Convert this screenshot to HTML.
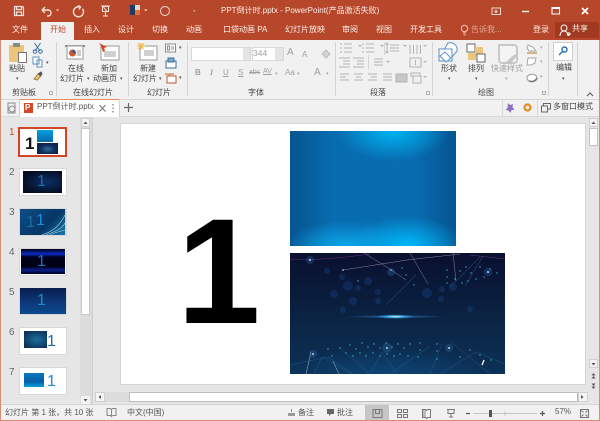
<!DOCTYPE html>
<html><head><meta charset="utf-8"><style>
html,body{margin:0;padding:0;background:#e6e6e6}
#w{position:relative;width:600px;height:421px;overflow:hidden;background:#e6e6e6;font-family:"Liberation Sans","Noto Sans CJK SC",sans-serif;font-size:8px;color:#444;filter:blur(.3px)}
#w div,#w span,#w svg{position:absolute}
.t{white-space:nowrap;line-height:12px}
.wh{color:#fbeee9}
.g{color:#a0a0a0}
.ar{font-size:5px;color:#555}
.s{background:#fff;border:1px solid #c8c8c8;box-sizing:border-box}
.th{background:#fff;border:1px solid #d8d8d8;box-sizing:border-box}
.n{color:#666;font-size:10px;left:9px;line-height:12px}
.sep{background:#d4d4d4;width:1px;top:42px;height:54px}
.tn{font-size:16px;line-height:15px;white-space:nowrap}
</style></head><body><div id="w">
<div style="left:0;top:0;width:600px;height:40px;background:#b7472a"></div>
<div style="left:41px;top:22px;width:33px;height:18px;background:#f1f1f1"></div>
<div style="left:1px;top:40px;width:598px;height:59px;background:#f1f1f1"></div>
<div style="left:1px;top:99px;width:598px;height:1px;background:#d6d6d6"></div>
<div style="left:1px;top:100px;width:598px;height:16px;background:#f1f1f1"></div>
<div style="left:1px;top:116px;width:598px;height:1px;background:#d9d9d9"></div>
<div style="left:0;top:40px;width:1px;height:381px;background:#d98a75"></div>
<div style="left:599px;top:40px;width:1px;height:381px;background:#d98a75"></div>
<div style="left:0;top:420px;width:600px;height:1px;background:#d98a75"></div>

<!-- QAT icons -->
<svg style="left:0;top:0" width="300" height="22" fill="none" stroke="#f6e3dc" stroke-width="1.200">
<path d="M14.500 6.500h8l1 1v8h-9z M16.500 6.500v3h5v-3 M16.500 15.500v-3.500h5v3.500"/>
<path d="M42 10l3-3M42 10l3 3M42 10h6c4 0 4 6 0 6h-1" stroke-width="1.400"/>
<path d="M56 9.500h3l-1.500 1.700z" fill="#f6e3dc" stroke="none"/>
<path d="M80 7a5 5 0 1 0 2.500 1.800M78 5.500l2.500 1.500-1.500 2.500" stroke-width="1.400"/>
<path d="M101 6h9M102.500 6.500h6v5h-6zM105.500 11.500v4M103 16h5M103.500 7l4 5" stroke-width="1"/>
<circle cx="165" cy="11" r="4.500" stroke-width=".9"/>
<path d="M193 10.500h2.500l-1.200 1.200z" fill="#f6e3dc" stroke="none"/>
<path d="M144 9.500h3.500l-1.700 1.700z" fill="#f6e3dc" stroke="none"/>
</svg>
<div style="left:130px;top:5px;width:5px;height:10px;background:#1f3b63"></div>
<div style="left:135px;top:5px;width:5px;height:5px;background:#d9d9d9"></div>
<div style="left:135px;top:10px;width:5px;height:5px;background:#e8702a"></div>

<span class="t wh" style="left:221px;top:5px;width:200px">PPT倒计时.pptx - PowerPoint(产品激活失败)</span>
<!-- window controls -->
<svg style="left:480px;top:0" width="120" height="22" fill="none" stroke="#fff">
<path d="M12 8h8.500v6.500H12zM16 9.500v3M14.500 11l1.500 1.500 1.500-1.500" stroke="#f3d9d0"/>
<path d="M42 11.500h7" stroke-width="1.400"/>
<path d="M72 7.500h7.500v6.500H72z" stroke-width="1.100"/><path d="M72 8h7.500" stroke-width="2"/>
<path d="M102 8l6 6M108 8l-6 6" stroke-width="1.700"/>
</svg>

<!-- tabs -->
<span class="t wh" style="left:12px;top:24px">文件</span>
<span class="t" style="left:50px;top:24px;color:#c0492a">开始</span>
<span class="t wh" style="left:84px;top:24px">插入</span>
<span class="t wh" style="left:118px;top:24px">设计</span>
<span class="t wh" style="left:152px;top:24px">切换</span>
<span class="t wh" style="left:186px;top:24px">动画</span>
<span class="t wh" style="left:223px;top:24px">口袋动画 PA</span>
<span class="t wh" style="left:285px;top:24px">幻灯片放映</span>
<span class="t wh" style="left:342px;top:24px">审阅</span>
<span class="t wh" style="left:376px;top:24px">视图</span>
<span class="t wh" style="left:410px;top:24px">开发工具</span>
<svg style="left:460px;top:24px" width="10" height="14" fill="none" stroke="#eec4b6"><circle cx="4.500" cy="4.500" r="3.200"/><path d="M3 9h3M3.500 11h2"/></svg>
<span class="t" style="left:471px;top:24px;color:#e0a694">告诉我...</span>
<span class="t wh" style="left:533px;top:24px">登录</span>
<div style="left:555px;top:22px;width:44px;height:16px;background:#a0391f"></div>
<svg style="left:559px;top:24px" width="13" height="13" fill="none" stroke="#fff"><circle cx="5" cy="4" r="3"/><path d="M1 12c0-3.500 2-5 4-5s4 1.500 4 5M8 10h4M10 8v4"/></svg>
<span class="t wh" style="left:572px;top:23px">共享</span>

<!-- Clipboard -->
<div style="left:9px;top:45px;width:15px;height:17px;background:#ecc57d;border-radius:1px"></div>
<div style="left:13px;top:43px;width:7px;height:4px;background:#8a8a8a"></div>
<div style="left:18px;top:52px;width:9px;height:11px;background:#fff;border:1px solid #777;box-sizing:border-box"></div>
<span class="t" style="left:9px;top:63px">粘贴</span>
<span class="t ar" style="left:16px;top:73px">▾</span>
<svg style="left:31px;top:42px" width="22" height="42" fill="none" stroke="#3f6e9b">
<path d="M3.500 1l5.500 8M9.500 1L4 9"/><circle cx="4" cy="9.500" r="1.800"/><circle cx="9.500" cy="9.500" r="1.800"/>
<path d="M2 15h6v7H2zM6 18h5v7H6z" stroke="#5b8fc0" fill="#fff"/>
<path d="M3 37l4-5 3 2-4 4z" fill="#ecc57d" stroke="#a58340"/><path d="M7 32l3-2 1 2-2 2" fill="#555" stroke="#555"/>
</svg>
<span class="t ar" style="left:46px;top:57px">▾</span>
<span class="t" style="left:12px;top:87px">剪贴板</span>
<svg style="left:49px;top:91px" width="5" height="5" fill="none" stroke="#a0a0a0" stroke-width=".8"><path d="M.5.500h3v3h-3z"/></svg>
<div class="sep" style="left:56px"></div>

<!-- online slides -->
<svg style="left:64px;top:43px" width="60" height="19" fill="none">
<path d="M1 3h20" stroke="#666" stroke-width="1.500"/><path d="M3 3h16v13H3z" fill="#fff" stroke="#999"/>
<circle cx="8.500" cy="10" r="3.500" fill="#d2562f"/><path d="M8.500 10V6.500a3.500 3.500 0 0 1 3.500 3.500z" fill="#2c5d95"/><path d="M13 8h4M13 10h4M13 12h4" stroke="#999"/>
<path d="M37 3h18v14H37z" fill="#fff" stroke="#999"/><path d="M40 8h12v6H40z" fill="#d0d0d0"/>
<path d="M35 0l8 4-3 1 1 3-2 1-2-6z" fill="#d9452a"/>
</svg>
<span class="t" style="left:68px;top:63px">在线</span>
<span class="t" style="left:60px;top:73px">幻灯片</span><span class="t ar" style="left:87px;top:73px">▾</span>
<span class="t" style="left:101px;top:63px">新加</span>
<span class="t" style="left:93px;top:73px">动画页</span><span class="t ar" style="left:120px;top:73px">▾</span>
<span class="t" style="left:73px;top:87px">在线幻灯片</span>
<div class="sep" style="left:128px"></div>

<!-- slides -->
<svg style="left:136px;top:43px" width="42" height="42" fill="none">
<path d="M4 3h17v14H4z" fill="#fff" stroke="#999"/><path d="M8 7h10v6H8z" fill="#d0d0d0"/>
<circle cx="5" cy="3" r="2.500" fill="#f0c060"/><path d="M5-1v8M1 3h8M2 0l6 6M8 0L2 6" stroke="#f0c060"/>
<path d="M29.500 1h10v8h-10z" fill="#fff" stroke="#888"/><path d="M31.500 3h2v4h-2zM35 4h3M35 6h3" stroke="#888"/>
<path d="M30 18h10v7H30z" fill="#fff" stroke="#3f6e9b"/><path d="M32 15h6v4h-6z" fill="#7aa6cf" stroke="#3f6e9b"/>
<path d="M31 33h9v7h-9z" fill="#fff" stroke="#c0562d"/><path d="M29 30h3v2h-3z" fill="#ecae50"/><path d="M33 33v-2h5" stroke="#c0562d"/>
</svg>
<span class="t" style="left:140px;top:63px">新建</span>
<span class="t" style="left:133px;top:73px">幻灯片</span><span class="t ar" style="left:159px;top:73px">▾</span>
<span class="t ar" style="left:179px;top:42px">▾</span><span class="t ar" style="left:179px;top:72px">▾</span>
<span class="t" style="left:147px;top:87px">幻灯片</span>
<div class="sep" style="left:187px"></div>

<!-- font -->
<div class="s" style="left:191px;top:47px;width:60px;height:14px;border-color:#d8d8d8"></div>
<div style="left:243px;top:48px;width:7px;height:12px;background:#e4e4e4"></div>
<div class="s" style="left:252px;top:47px;width:32px;height:14px;border-color:#d8d8d8"></div>
<div style="left:275px;top:48px;width:8px;height:12px;background:#e4e4e4"></div>
<span class="t g" style="left:253px;top:47px;font-size:8.500px">344</span>
<span class="t g" style="left:287px;top:47px;font-size:10px">A</span>
<span class="t g" style="left:302px;top:49px;font-size:8px">A</span>
<svg style="left:319px;top:46px" width="14" height="14" fill="none" stroke="#bdbdbd"><path d="M3 8l4-4 4 4-4 4z" fill="#d4d4d4"/></svg>
<span class="t g" style="left:195px;top:67px;font-weight:bold">B</span>
<span class="t g" style="left:210px;top:67px;font-style:italic;font-family:'Liberation Serif',serif;font-weight:bold">I</span>
<span class="t g" style="left:223px;top:67px;text-decoration:underline">U</span>
<span class="t g" style="left:238px;top:67px;text-decoration:underline">S</span>
<span class="t g" style="left:249px;top:67px;font-size:7px;text-decoration:line-through">abc</span>
<span class="t g" style="left:263px;top:66px;font-size:7px;text-decoration:underline">AV</span>
<span class="t g ar" style="left:275px;top:68px;color:#a8a8a8">▾</span>
<span class="t g" style="left:285px;top:67px">Aa</span>
<span class="t g ar" style="left:297px;top:68px;color:#a8a8a8">▾</span>
<span class="t g" style="left:314px;top:67px;font-size:10px">A</span>
<span class="t g ar" style="left:326px;top:68px;color:#a8a8a8">▾</span>
<span class="t" style="left:248px;top:87px">字体</span>
<div class="sep" style="left:335px"></div>

<!-- paragraph -->
<svg style="left:338px;top:41px" width="94" height="44" fill="none" stroke="#b2b2b2">
<path d="M2 3h2M2 7h2M2 11h2M6 3h8M6 7h8M6 11h8M24 3h2M24 7h2M24 11h2M28 3h8M28 7h8M28 11h8"/>
<path d="M52 4h9M52 7h9M52 10h9M49 2v10M47.500 3.500L49 2l1.500 1.500M47.500 10.500L49 12l1.500-1.500"/>
<path d="M72 4v9M75.500 4v9M79 4v9M82.500 4v9"/>
<path d="M1 17h11M5 20h7M5 23h7M1 26h11M15 17h11M19 20h7M19 23h7M15 26h11"/>
<path d="M36 18h9M36 21h9M36 24h9"/>
<path d="M72 17h11v9H72zM77.500 19v5"/>
<path d="M2 33h9M2 36h6M2 39h9M16 33h9M18 36h5M16 39h9M30 33h9M33 36h6M30 39h9M45 33h9M45 36h9M45 39h9"/>
<path d="M58 33h11v8H58z" fill="#c8c8c8"/><path d="M73 32h9v3h-9zM75 35h8v7h-8z"/>
</svg>
<svg style="left:355px;top:42px" width="10" height="10" fill="#b2b2b2"><path d="M3 3h4L5 5z"/></svg>
<svg style="left:377px;top:42px" width="10" height="10" fill="#b2b2b2"><path d="M3 3h4L5 5z"/></svg>
<svg style="left:400px;top:42px" width="10" height="10" fill="#b2b2b2"><path d="M3 3h4L5 5z"/></svg>
<svg style="left:420px;top:42px" width="10" height="10" fill="#b2b2b2"><path d="M3 3h4L5 5z"/></svg>
<svg style="left:383px;top:58px" width="10" height="10" fill="#b2b2b2"><path d="M3 3h4L5 5z"/></svg>
<svg style="left:420px;top:58px" width="10" height="10" fill="#b2b2b2"><path d="M3 3h4L5 5z"/></svg>
<svg style="left:420px;top:73px" width="10" height="10" fill="#b2b2b2"><path d="M3 3h4L5 5z"/></svg>
<div style="left:384px;top:42px;width:1px;height:13px;background:#d4d4d4"></div>
<div style="left:368px;top:55px;width:1px;height:14px;background:#d4d4d4"></div>
<span class="t" style="left:370px;top:87px">段落</span>
<svg style="left:426px;top:91px" width="5" height="5" fill="none" stroke="#a0a0a0" stroke-width=".8"><path d="M.5.500h3v3h-3z"/></svg>
<div class="sep" style="left:432px"></div>

<!-- drawing -->
<svg style="left:437px;top:42px" width="85" height="24" fill="none">
<path d="M11 1a7 7 0 0 1 9 8l-5 6-8-7z" fill="#fff" stroke="#5a8fc2"/>
<path d="M2 7h13v12H2z" fill="#fff" stroke="#5a8fc2"/><path d="M3 14l5 -4 6 6-5 4z" fill="#fff" stroke="#5a8fc2"/>
<path d="M30 2h8v8h-8z" fill="#fff" stroke="#666"/><path d="M38 5h8v9h-8z" fill="#ecc57d"/><path d="M31 11h8v7h-8z" fill="#ecc57d"/><path d="M40 12h8v8h-8z" fill="#fff" stroke="#666"/>
<path d="M62 3h15a3 3 0 0 1 3 3v12a3 3 0 0 1-3 3H65a3 3 0 0 1-3-3z" fill="#f4f4f4" stroke="#c8c8c8" stroke-width="2"/><path d="M68 21l10-9 2 2-7 8z" fill="#c4c4c4"/>
</svg>
<svg style="left:526px;top:42px" width="13" height="42" fill="none">
<path d="M2 3l5 2 3 4H3l-2-3z" fill="#f8f8f8" stroke="#a8a8a8"/><path d="M1 11h10" stroke="#c8a45a" stroke-width="1.500"/>
<path d="M2 16h8l-1 5-4 2H1z" fill="#fff" stroke="#a8a8a8"/>
<ellipse cx="6" cy="36" rx="5" ry="3.800" fill="#fff" stroke="#9c9c9c"/><path d="M3 39c3 1 6 .500 8-3" stroke="#777" stroke-width="1.500"/>
</svg>
<span class="t g ar" style="left:540px;top:42px;color:#a8a8a8">▾</span><span class="t g ar" style="left:540px;top:56px;color:#a8a8a8">▾</span><span class="t g ar" style="left:540px;top:71px;color:#a8a8a8">▾</span>
<span class="t" style="left:441px;top:63px">形状</span><span class="t ar" style="left:448px;top:73px">▾</span>
<span class="t" style="left:468px;top:63px">排列</span><span class="t ar" style="left:475px;top:73px">▾</span>
<span class="t g" style="left:491px;top:63px">快速样式</span><span class="t g ar" style="left:505px;top:73px;color:#a8a8a8">▾</span>
<span class="t" style="left:478px;top:87px">绘图</span>
<svg style="left:542px;top:91px" width="5" height="5" fill="none" stroke="#a0a0a0" stroke-width=".8"><path d="M.5.500h3v3h-3z"/></svg>
<div class="sep" style="left:548px"></div>

<!-- edit -->
<div style="left:553px;top:42px;width:20px;height:19px;background:#fff;border:1px solid #cfcfcf;box-sizing:border-box"></div>
<svg style="left:557px;top:45px" width="12" height="12" fill="none" stroke="#2b6fb0" stroke-width="1.400"><circle cx="7.500" cy="4.500" r="2.500"/><path d="M5.500 6.500l-3.500 3.500"/></svg>
<span class="t" style="left:556px;top:62px">编辑</span><span class="t ar" style="left:562px;top:73px">▾</span>
<div class="sep" style="left:577px"></div>
<svg style="left:586px;top:91px" width="8" height="6" fill="none" stroke="#555"><path d="M1 5l3-3 3 3"/></svg>

<!-- doc tab strip -->
<svg style="left:6px;top:101px" width="12" height="14" fill="none" stroke="#8a8a8a"><path d="M2 2h7v10H2z"/><circle cx="6" cy="8" r="3" fill="#f1f1f1"/></svg>
<div style="left:19px;top:99px;width:1px;height:18px;background:#d0d0d0"></div>
<div style="left:20px;top:100px;width:99px;height:17px;background:#fff"></div>
<div style="left:20px;top:99px;width:99px;height:1px;background:#e88a5c"></div>
<div style="left:24px;top:103px;width:9px;height:10px;background:#d24726"></div>
<span class="t" style="left:25px;top:102px;font-size:8px;font-weight:bold;color:#fff">P</span>
<span class="t" style="left:37px;top:101px;color:#555">PPT倒计时.pptx</span>
<svg style="left:98px;top:103px" width="20" height="11" fill="none" stroke="#777"><path d="M1.500 2l6 6.500M7.500 2l-6 6.500"/><path d="M15 1v1.500M15 4.500V6M15 8v1.500" stroke-width="1.200"/></svg>
<div style="left:119px;top:99px;width:1px;height:18px;background:#d0d0d0"></div>
<svg style="left:122px;top:102px" width="12" height="11" fill="none" stroke="#666" stroke-width="1.200"><path d="M2 5.500h9M6.500 1v9"/></svg>
<div style="left:502px;top:100px;width:1px;height:16px;background:#d8d8d8"></div>
<div style="left:537px;top:100px;width:1px;height:16px;background:#d8d8d8"></div>
<svg style="left:503px;top:100px" width="32" height="16"><path d="M5 3l2 2 3-1-.5 3 2 3-3 0-1 3-2-2.500-3-.5 2-2z" fill="#8a70bf"/><circle cx="24.500" cy="7.500" r="3" fill="none" stroke="#e88a1a" stroke-width="2.200"/></svg>
<svg style="left:540px;top:101px" width="12" height="12" fill="none" stroke="#666"><path d="M1.500 5h6v6h-6zM3.500 5V2.500h7V8H7.500"/></svg>
<span class="t" style="left:553px;top:101px">多窗口模式</span>

<!-- thumbs -->
<div style="left:80px;top:117px;width:12px;height:288px;background:#dcdcdc"></div>
<div style="left:92px;top:117px;width:1px;height:288px;background:#cfcfcf"></div>
<div style="left:81px;top:118px;width:9px;height:9px;background:#f4f4f4;border:1px solid #cfcfcf;box-sizing:border-box"></div>
<div style="left:81px;top:128px;width:9px;height:187px;background:#fff;border:1px solid #c8c8c8;box-sizing:border-box"></div>
<div style="left:81px;top:396px;width:9px;height:8px;background:#f4f4f4"></div>
<svg style="left:81px;top:118px" width="9" height="286" fill="#555"><path d="M2.500 6h4L4.500 3.500zM2.500 281h4l-2 2.500z"/></svg>

<span class="n" style="color:#d24726;top:127px">1</span>
<div style="left:18px;top:127px;width:49px;height:30px;background:#fff;border:2px solid #d14424;box-sizing:border-box"></div>
<span class="t" style="left:25px;top:135px;font-size:17px;line-height:18px;font-weight:bold;color:#111">1</span>
<div style="left:37px;top:130px;width:16px;height:12px;background:linear-gradient(#00a0e0,#0a6aaa)"></div>
<div style="left:37px;top:143px;width:21px;height:11px;background:radial-gradient(ellipse at 50% 55%,#2f6e9c 0,#0e2c58 50%,#0a1e46 100%)"></div>

<span class="n" style="top:167px">2</span>
<div class="th" style="left:19px;top:168px;width:48px;height:28px"></div>
<div style="left:23px;top:171px;width:39px;height:22px;background:radial-gradient(ellipse at 60% 50%,#0c3068,#050d22 75%)"></div>
<span class="tn" style="left:37px;top:174px;color:#1c6fa8">1</span>

<span class="n" style="top:207px">3</span>
<div class="th" style="left:19px;top:208px;width:48px;height:28px;background:#cfcfcf"></div>
<div style="left:20px;top:209px;width:45px;height:26px;background:linear-gradient(135deg,#0f4d86,#063665 60%,#1a78a8)"></div>
<svg style="left:20px;top:209px" width="45" height="26" fill="none" stroke="#a9dcf0" stroke-width=".6"><path d="M22 26C34 22 40 16 45 6M26 26C36 22 42 20 45 14M30 26c6-3 11-4 15-5"/></svg>
<span class="tn" style="left:36px;top:213px;color:#1a8fe0">1</span><span class="tn" style="left:26px;top:215px;color:#1a6ea5">1</span>

<span class="n" style="top:247px">4</span>
<div class="th" style="left:19px;top:248px;width:48px;height:28px"></div>
<div style="left:21px;top:249px;width:44px;height:25px;background:linear-gradient(#000012,#0a2ac0 20%,#000020 32%,#000012 70%,#0a2090 84%,#000010)"></div>
<span class="tn" style="left:37px;top:254px;color:#1a78c0">1</span>

<span class="n" style="top:287px">5</span>
<div class="th" style="left:19px;top:288px;width:48px;height:27px"></div>
<div style="left:20px;top:288px;width:46px;height:26px;background:linear-gradient(#0a1d4f,#0c3a7a 60%,#0a4a8c)"></div>
<span class="tn" style="left:37px;top:293px;color:#1f8ad0">1</span>

<span class="n" style="top:327px">6</span>
<div class="th" style="left:19px;top:327px;width:48px;height:28px"></div>
<div style="left:24px;top:331px;width:23px;height:17px;background:radial-gradient(ellipse at 55% 50%,#1a6fa0,#0c2f55 85%)"></div>
<span class="tn" style="left:47px;top:334px;color:#1a6cb0">1</span>

<span class="n" style="top:367px">7</span>
<div class="th" style="left:19px;top:367px;width:48px;height:28px"></div>
<div style="left:24px;top:373px;width:20px;height:14px;background:linear-gradient(#0a7ac0,#0a5da4 60%,#00a0e6)"></div>
<span class="tn" style="left:47px;top:374px;color:#1a88d8">1</span>

<!-- slide -->
<div style="left:120px;top:123px;width:466px;height:262px;background:#d4d4d4"></div>
<div style="left:121px;top:124px;width:464px;height:260px;background:#fff"></div>
<span class="t" style="left:177px;top:176px;font-size:150px;line-height:190px;font-weight:bold;color:#000">1</span>
<div style="left:290px;top:131px;width:166px;height:115px;background:radial-gradient(ellipse 34% 26% at 62% 0,#00b4f2 0,rgba(0,180,242,0) 100%),radial-gradient(ellipse 36% 22% at 33% 100%,#0aa8ea 0,rgba(10,168,234,0) 100%),radial-gradient(ellipse 36% 26% at 70% 100%,#00bafc 0,rgba(0,186,252,0) 100%),linear-gradient(90deg,#065490 0,#086cb0 25%,#086cb0 75%,#065490 100%)"></div>
<div style="left:290px;top:253px;width:215px;height:121px;background:radial-gradient(ellipse 9% 1.800% at 49% 52.600%,#e8fbff 0,rgba(47,159,224,.9) 50%,rgba(47,159,224,0) 100%),radial-gradient(ellipse 24% 1.200% at 49% 52.600%,rgba(60,160,225,.7) 0,rgba(47,159,224,0) 100%),radial-gradient(ellipse 50% 22% at 45% 100%,#0e4474 0,rgba(15,80,135,0) 100%),linear-gradient(#0a1030 0,#0a1a3a 30%,#0b2646 60%,#0c3056 100%)"></div>
<svg style="left:290px;top:253px" width="215" height="121" fill="none" stroke-width=".5">
<g fill="#1c4f9c" stroke="none" opacity=".3"><circle cx="37" cy="18" r="3"/><circle cx="52" cy="24" r="3"/><circle cx="58" cy="33" r="5"/><circle cx="68" cy="35" r="3"/><circle cx="78" cy="28" r="4"/><circle cx="44" cy="41" r="4"/><circle cx="63" cy="48" r="4"/><circle cx="88" cy="39" r="3"/><circle cx="88" cy="48" r="3"/><circle cx="137" cy="40" r="5"/><circle cx="151" cy="46" r="3"/><circle cx="163" cy="34" r="4"/><circle cx="152" cy="36" r="3"/><circle cx="53" cy="57" r="3"/><circle cx="180" cy="56" r="3"/></g>
<g stroke="#8a8694"><path d="M74 0l26 16M100 16l16 11M53 17l64-10 53-6M120 0l18 31M163 0l3 28"/></g>
<g stroke="#6a2f7a"><path d="M0 6c20 2 50-1 80-5M180 2l35 4"/></g>
<g stroke="#2d5a90"><path d="M96 52l30-30M160 34l30-30M175 33l18-30"/></g>
<g stroke="#2f6898" opacity=".7"><path d="M0 112l38-8 25 17M24 121l8-17M32 104l30 17M80 121l12-22 15 22M100 121l40-28M140 121l12-30M150 121l36-22 29 12M160 88l40 33M50 95l30 26"/></g>
<g stroke="#bcbcbc"><path d="M16 121l5-22M43 108l6 13"/></g>
<g fill="#34b4c4" stroke="none">
<circle cx="112" cy="15" r=".7"/><circle cx="116" cy="22" r=".7"/><circle cx="124" cy="32" r=".7"/><circle cx="68" cy="28" r=".7"/>
<circle cx="157" cy="17" r=".7"/><circle cx="157" cy="24" r=".7"/><circle cx="157" cy="30" r=".7"/><circle cx="165" cy="26" r=".7"/><circle cx="170" cy="18" r=".7"/><circle cx="176" cy="14" r=".7"/><circle cx="181" cy="20" r=".7"/><circle cx="186" cy="26" r=".7"/><circle cx="190" cy="14" r=".7"/><circle cx="194" cy="24" r=".7"/><circle cx="200" cy="16" r=".7"/><circle cx="207" cy="20" r=".7"/><circle cx="178" cy="28" r=".7"/><circle cx="172" cy="30" r=".7"/>
<circle cx="60" cy="92" r=".7"/><circle cx="66" cy="96" r=".7"/><circle cx="72" cy="90" r=".7"/><circle cx="78" cy="94" r=".7"/><circle cx="84" cy="91" r=".7"/><circle cx="90" cy="95" r=".7"/><circle cx="96" cy="90" r=".7"/><circle cx="102" cy="94" r=".7"/><circle cx="108" cy="91" r=".7"/><circle cx="114" cy="95" r=".7"/><circle cx="120" cy="91" r=".7"/><circle cx="130" cy="90" r=".7"/><circle cx="130" cy="97" r=".7"/><circle cx="147" cy="91" r=".7"/><circle cx="147" cy="98" r=".7"/>
<circle cx="50" cy="95" r=".7"/><circle cx="56" cy="100" r=".7"/><circle cx="63" cy="103" r=".7"/><circle cx="70" cy="100" r=".7"/><circle cx="76" cy="103" r=".7"/><circle cx="83" cy="100" r=".7"/><circle cx="90" cy="103" r=".7"/><circle cx="97" cy="101" r=".7"/><circle cx="104" cy="103" r=".7"/><circle cx="110" cy="101" r=".7"/><circle cx="118" cy="103" r=".7"/><circle cx="128" cy="104" r=".7"/><circle cx="147" cy="106" r=".7"/><circle cx="38" cy="96" r=".7"/><circle cx="42" cy="103" r=".7"/><circle cx="180" cy="97" r=".7"/><circle cx="170" cy="104" r=".7"/><circle cx="190" cy="102" r=".7"/><circle cx="201" cy="107" r=".7"/></g>
<g fill="#d8eeff" stroke="none"><circle cx="20" cy="7" r="1"/><circle cx="101" cy="17" r=".8"/><circle cx="53" cy="17" r=".8"/><circle cx="198" cy="19" r="1"/><circle cx="23" cy="101" r="1"/><circle cx="97" cy="95" r="1"/><circle cx="159" cy="95" r="1"/></g>
<path d="M192 112l2-5" stroke="#fff" stroke-width="1.300"/>
<g fill="#3f86c8" opacity=".25" stroke="none"><circle cx="20" cy="7" r="4"/><circle cx="101" cy="19" r="4"/><circle cx="198" cy="19" r="4"/><circle cx="23" cy="101" r="4"/><circle cx="97" cy="95" r="5"/><circle cx="159" cy="95" r="4"/></g>
</svg>

<!-- right scrollbar -->
<div style="left:589px;top:118px;width:9px;height:9px;background:#f4f4f4;border:1px solid #cfcfcf;box-sizing:border-box"></div>
<div style="left:589px;top:128px;width:9px;height:18px;background:#fff;border:1px solid #c4c4c4;box-sizing:border-box"></div>
<div style="left:589px;top:359px;width:9px;height:9px;background:#f4f4f4;border:1px solid #cfcfcf;box-sizing:border-box"></div>
<svg style="left:589px;top:118px" width="9" height="275" fill="#555"><path d="M2.500 6h4L4.500 3.500zM2.500 245h4l-2 2.500z"/><path d="M2.500 257.500h4L4.500 255zM2.500 260.500h4L4.500 258zM2.500 265.500h4l-2 2.500zM2.500 268.500h4l-2 2.500z"/></svg>

<!-- h scrollbar -->
<div style="left:95px;top:392px;width:10px;height:10px;background:#f4f4f4;border:1px solid #cfcfcf;box-sizing:border-box"></div>
<div style="left:129px;top:392px;width:449px;height:10px;background:#fff;border:1px solid #bdbdbd;box-sizing:border-box"></div>
<div style="left:578px;top:392px;width:10px;height:10px;background:#f4f4f4;border:1px solid #cfcfcf;box-sizing:border-box"></div>
<div style="left:105px;top:392px;width:24px;height:10px;background:#dcdcdc"></div>
<svg style="left:95px;top:392px" width="495" height="10" fill="#555"><path d="M6 3v4L3.500 5zM486 3v4l2.500-2z"/></svg>

<!-- status -->
<div style="left:1px;top:405px;width:598px;height:15px;background:#f1f1f1"></div>
<div style="left:1px;top:404px;width:598px;height:1px;background:#d6d6d6"></div>
<span class="t" style="left:5px;top:407px;color:#555">幻灯片 第 1 张，共 10 张</span>
<svg style="left:106px;top:408px" width="11" height="10" fill="none" stroke="#888"><path d="M1 .500h3.500l1 1 1-1H10v7H6.500l-1 1-1-1H1zM5.500 1.500v7"/></svg>
<span class="t" style="left:127px;top:407px;color:#555">中文(中国)</span>
<svg style="left:287px;top:408px" width="10" height="10" fill="#999"><path d="M1 5h7v3H1z"/><path d="M4.500 1v3" stroke="#888"/></svg>
<span class="t" style="left:298px;top:407px;color:#555">备注</span>
<svg style="left:326px;top:409px" width="10" height="9" fill="#666"><path d="M1 0h7v5H5L3 7V5H1z"/></svg>
<span class="t" style="left:337px;top:407px;color:#555">批注</span>
<div style="left:365px;top:405px;width:24px;height:15px;background:#c6c6c6"></div>
<svg style="left:365px;top:405px" width="235" height="15" fill="none" stroke="#777">
<path d="M8 4.500h9v8H8zM10.500 4.500v4h4v-4"/>
<path d="M32.500 4.500h4v3h-4zM38.500 4.500h4v3h-4zM32.500 9.500h4v3h-4zM38.500 9.500h4v3h-4z"/>
<path d="M57.500 4.500h3l1 1 1-1h3v8h-3l-1 1-1-1h-3z"/><path d="M58 5v7h3V5z" fill="#bbb" stroke="none"/>
<path d="M82 4.500h8M83 4.500v4h6v-4M86 8.500v3M84 12h4"/>
<path d="M101 8.500h4" stroke="#555" stroke-width="1.200"/>
<path d="M108 8.500h64" stroke="#c4c4c4"/>
<path d="M124 5h3v7h-3z" fill="#555" stroke="none"/>
<path d="M140 6.500v4" stroke="#bbb"/>
<path d="M175 8.500h5M177.500 6v5" stroke="#555" stroke-width="1.200"/>
<path d="M215.500 4.500h8v8h-8z"/><path d="M216.500 5.500l2 2M222.500 5.500l-2 2M216.500 11.500l2-2M222.500 11.500l-2-2"/>
</svg>
<span class="t" style="left:555px;top:406px;color:#555">57%</span>
</div></body></html>
